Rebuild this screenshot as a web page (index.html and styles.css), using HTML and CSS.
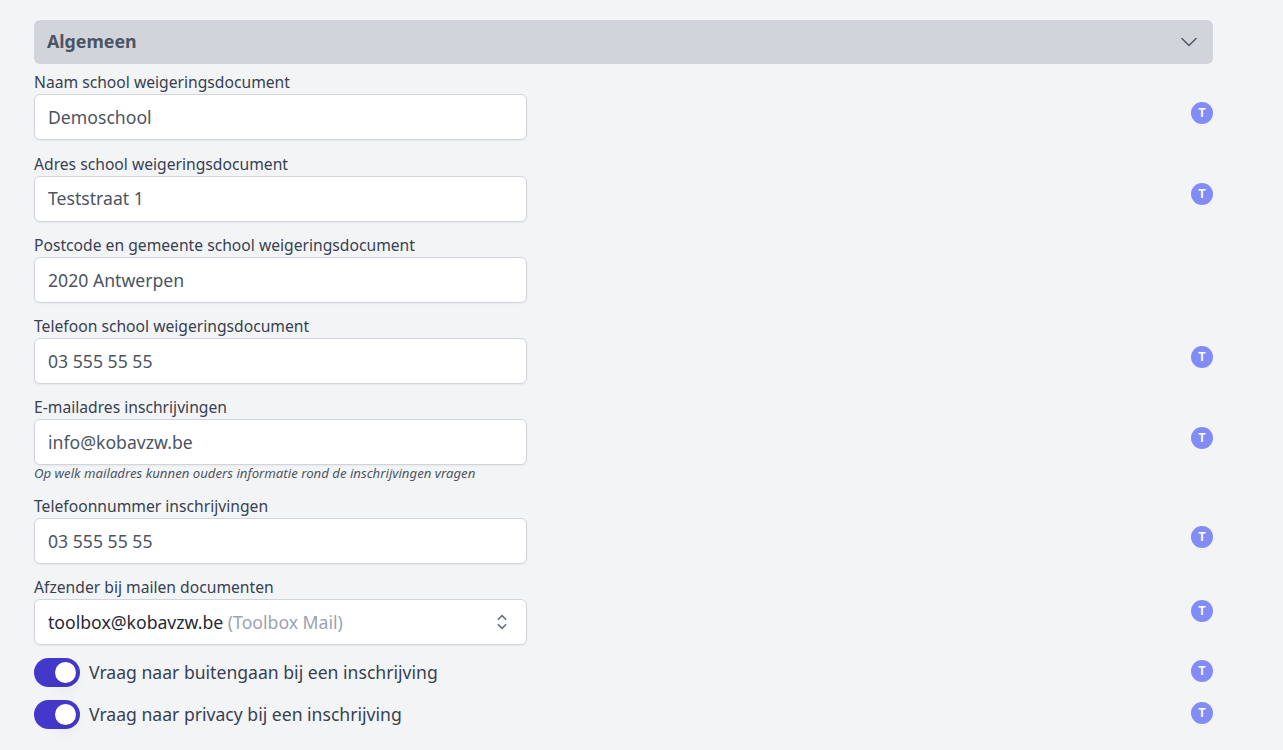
FILE: index.html
```html
<!DOCTYPE html>
<html lang="nl">
<head>
<meta charset="utf-8">
<title>Algemeen</title>
<link rel="stylesheet" href="styles.css">
</head>
<body>
<main class="page">
  <header class="section-header">
    <h2>Algemeen</h2>
    <svg class="chevron" viewBox="0 0 24 24" fill="none" stroke="currentColor" stroke-width="1.7" stroke-linecap="round" stroke-linejoin="round"><path d="M20.5 7.8L12 16.3 3.5 7.8"/></svg>
  </header>
  <div class="row first">
    <div class="field"><label>Naam school weigeringsdocument</label><div class="input">Demoschool</div></div>
    <span class="badge">T</span>
  </div>
  <div class="row address">
    <div class="field"><label>Adres school weigeringsdocument</label><div class="input">Teststraat 1</div></div>
    <span class="badge">T</span>
  </div>
  <div class="row">
    <div class="field"><label>Postcode en gemeente school weigeringsdocument</label><div class="input">2020 Antwerpen</div></div>
  </div>
  <div class="row">
    <div class="field"><label>Telefoon school weigeringsdocument</label><div class="input">03 555 55 55</div></div>
    <span class="badge">T</span>
  </div>
  <div class="row hinted">
    <div class="field"><label>E-mailadres inschrijvingen</label><div class="input">info@kobavzw.be</div><p class="hint">Op welk mailadres kunnen ouders informatie rond de inschrijvingen vragen</p></div>
    <span class="badge">T</span>
  </div>
  <div class="row">
    <div class="field"><label>Telefoonnummer inschrijvingen</label><div class="input">03 555 55 55</div></div>
    <span class="badge">T</span>
  </div>
  <div class="row select-row">
    <div class="field"><label>Afzender bij mailen documenten</label>
      <div class="input select"><span>toolbox@kobavzw.be <span class="muted">(Toolbox Mail)</span></span>
      <svg class="updown" viewBox="0 0 24 24" fill="none" stroke="currentColor" stroke-width="1.8" stroke-linecap="round" stroke-linejoin="round"><path d="M8 15l4 4 4-4M8 9l4-4 4 4"/></svg></div>
    </div>
    <span class="badge">T</span>
  </div>
  <div class="row toggle-row">
    <div class="toggle-label"><span class="toggle"><span class="knob"></span></span><span class="toggle-text">Vraag naar buitengaan bij een inschrijving</span></div>
    <span class="badge">T</span>
  </div>
  <div class="row toggle-row">
    <div class="toggle-label"><span class="toggle"><span class="knob"></span></span><span class="toggle-text">Vraag naar privacy bij een inschrijving</span></div>
    <span class="badge">T</span>
  </div>
</main>
</body>
</html>
```
FILE: styles.css
```css
* { box-sizing: border-box; }
body { margin: 0; background: #f3f4f6; color: #374151; font-family: "Noto Sans", sans-serif; }
.page { width: 1179px; margin: 20px 0 0 34px; height: 730px; }
.section-header { display: flex; align-items: center; justify-content: space-between; height: 44px; padding: 0 14px 0 13px; border-radius: 6px; background: #d1d5db; color: #4b5563; }
.section-header h2 { margin: 0; padding-bottom: 2px; font-size: 17.8px; line-height: 28px; font-weight: 700; }
.chevron { width: 20px; height: 20px; }
.row { display: flex; justify-content: space-between; align-items: flex-start; height: 81px; }
.row.first { height: 82px; margin-top: 8px; }
.row.hinted { height: 99px; }
.field { width: 493px; }
label { display: block; height: 22px; font-size: 15.67px; line-height: 20px; white-space: nowrap; }
.input { height: 46px; padding: 0 13px; border: 1px solid #d1d5db; border-radius: 6px; background: #fff; color: #4b5563; font-size: 17.64px; line-height: 44px; box-shadow: 0 1px 2px rgba(0,0,0,.05); }
.address .input { line-height: 42px; }
.hint { margin: 0; font-size: 13.2px; line-height: 17px; font-style: italic; color: #4b5563; white-space: nowrap; }
.select { display: flex; justify-content: space-between; align-items: center; color: #1f2937; }
.muted { color: #9ca3af; }
.updown { width: 22px; height: 22px; color: #6b7280; }
.badge { width: 22px; height: 22px; margin-top: 30px; border-radius: 50%; background: #818cf8; color: #fff; font-size: 13px; line-height: 20px; font-weight: 600; text-align: center; }
.address .badge { margin-top: 29px; }
.select-row .badge { margin-top: 23px; }
.toggle-row { height: 42px; }
.toggle-row .badge { margin-top: 2px; }
.toggle-label { display: flex; align-items: center; gap: 9px; height: 29px; font-size: 17.6px; }
.toggle-text { padding-bottom: 2px; }
.toggle { display: flex; justify-content: flex-end; align-items: center; width: 46px; height: 29px; padding: 4px; border-radius: 15px; background: #4338ca; }
.knob { width: 21px; height: 21px; border-radius: 50%; background: #fff; box-shadow: 0 10px 15px -3px rgba(0,0,0,.08), 0 4px 6px -4px rgba(0,0,0,.08); }
```
